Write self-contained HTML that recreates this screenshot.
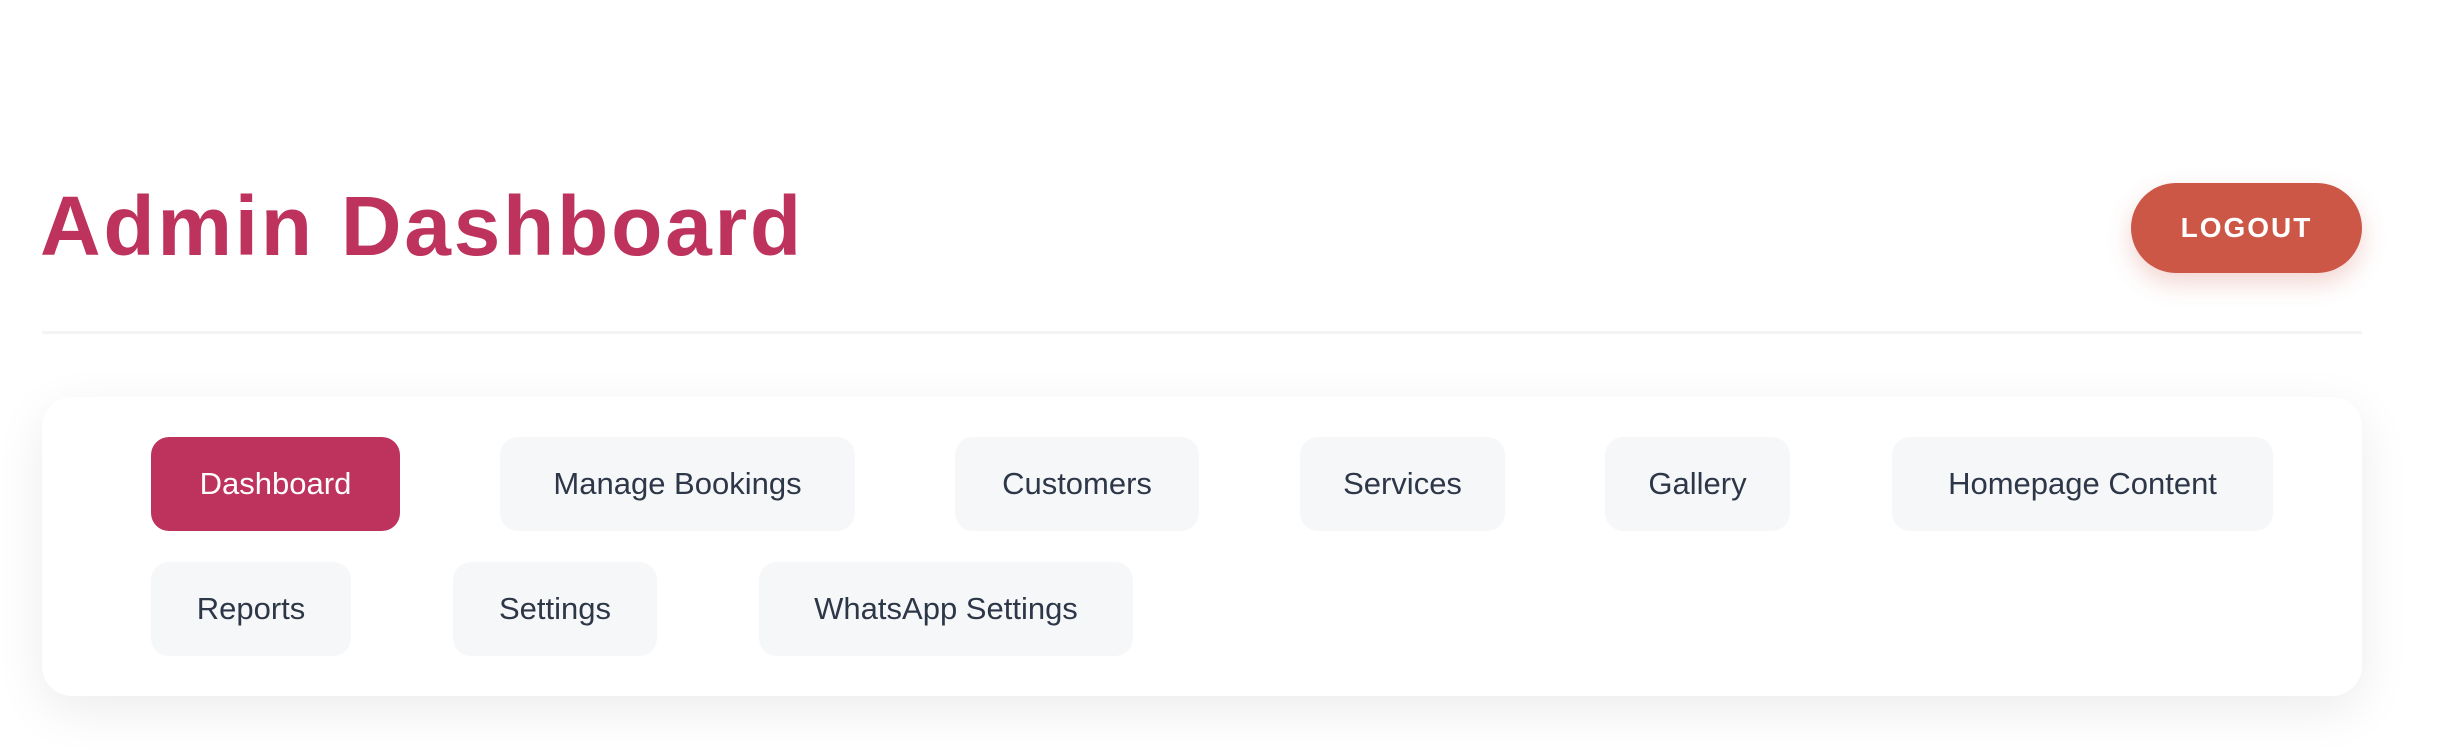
<!DOCTYPE html>
<html><head><meta charset="utf-8"><style>
html,body{margin:0;padding:0;background:#fff;width:2448px;height:750px;overflow:hidden;font-family:"Liberation Sans",sans-serif;}
.title{position:absolute;left:40px;top:176px;font-size:84px;font-weight:bold;color:#be325e;letter-spacing:2.7px;line-height:100px;white-space:nowrap;}
.logout{position:absolute;left:2131px;top:183px;width:231px;height:90px;border-radius:45px;background:#cc5746;color:#fff;font-weight:bold;font-size:28px;letter-spacing:2px;display:flex;align-items:center;justify-content:center;box-shadow:0 10px 24px rgba(204,87,70,0.25);}
.hr{position:absolute;left:42px;top:331px;width:2320px;height:3px;background:#f4f4f5;}
.card{position:absolute;left:42px;top:397px;width:2320px;height:299px;border-radius:30px;background:#fff;box-shadow:0 14px 50px rgba(0,0,0,0.08);}
.b{position:absolute;height:94px;border-radius:18px;background:#f6f7f9;color:#2d3748;font-size:31px;display:flex;align-items:center;justify-content:center;white-space:nowrap;}
.a{background:#be325e;color:#fff;}
</style></head><body>
<div class="title">Admin Dashboard</div>
<div class="logout">LOGOUT</div>
<div class="hr"></div>
<div class="card"></div>
<div class="b a" style="left:151px;top:437px;width:249px">Dashboard</div>
<div class="b" style="left:500px;top:437px;width:355px">Manage Bookings</div>
<div class="b" style="left:955px;top:437px;width:244px">Customers</div>
<div class="b" style="left:1300px;top:437px;width:205px">Services</div>
<div class="b" style="left:1605px;top:437px;width:185px">Gallery</div>
<div class="b" style="left:1892px;top:437px;width:381px">Homepage Content</div>
<div class="b" style="left:151px;top:562px;width:200px">Reports</div>
<div class="b" style="left:453px;top:562px;width:204px">Settings</div>
<div class="b" style="left:759px;top:562px;width:374px">WhatsApp Settings</div>
</body></html>
